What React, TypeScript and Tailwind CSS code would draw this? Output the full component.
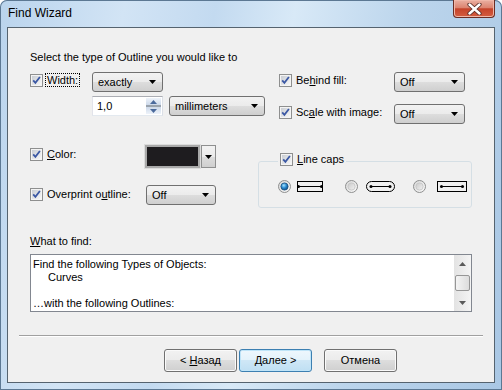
import React from "react";

const comboBg = "bg-[linear-gradient(#f2f2f2,#ebebeb_50%,#dddddd_50%,#cfcfcf)]";

const Check = () => (
  <svg width="13" height="13" viewBox="0 0 13 13" className="shrink-0">
    <defs>
      <linearGradient id="cbIn" x1="0" y1="0" x2="1" y2="1">
        <stop offset="0" stopColor="#c9cdd3" />
        <stop offset="1" stopColor="#f7f7f7" />
      </linearGradient>
    </defs>
    <rect x="0.5" y="0.5" width="12" height="12" fill="#f4f4f4" stroke="#8e8f8f" />
    <rect x="2" y="2" width="9" height="9" fill="url(#cbIn)" />
    <path d="M3.2 6.4 5.4 8.9 9.9 3" fill="none" stroke="#3b58a4" strokeWidth="1.8" />
  </svg>
);

const Radio = ({ on = false }: { on?: boolean }) => (
  <svg width="13" height="13" viewBox="0 0 13 13" className="shrink-0">
    <defs>
      <linearGradient id="rdOut" x1="0" y1="0" x2="1" y2="1">
        <stop offset="0" stopColor="#d6d6d6" />
        <stop offset="1" stopColor="#fbfbfb" />
      </linearGradient>
      <linearGradient id="rdOff" x1="0" y1="0" x2="1" y2="1">
        <stop offset="0" stopColor="#c9c9c9" />
        <stop offset="1" stopColor="#f2f2f2" />
      </linearGradient>
      <radialGradient id="rdOn" cx="0.4" cy="0.35" r="0.7">
        <stop offset="0" stopColor="#a6e4ff" />
        <stop offset="0.5" stopColor="#2a8ad0" />
        <stop offset="1" stopColor="#0c4a82" />
      </radialGradient>
    </defs>
    <circle cx="6.5" cy="6.5" r="6" fill="url(#rdOut)" stroke="#8e8f8f" />
    <circle
      cx="6.5"
      cy="6.5"
      r="3.6"
      fill={on ? "url(#rdOn)" : "url(#rdOff)"}
      stroke={on ? "#1b4f7e" : "#c4c4c4"}
      strokeWidth="0.8"
    />
  </svg>
);

const Arrow = ({ up = false, color = "#000" }: { up?: boolean; color?: string }) => (
  <svg width="7" height="4" viewBox="0 0 7 4" className="shrink-0">
    <path d={up ? "M0 4h7L3.5 0z" : "M0 0h7L3.5 4z"} fill={color} />
  </svg>
);

const Combo = ({ text, className = "" }: { text: string; className?: string }) => (
  <div
    className={`flex h-[20px] shrink-0 items-center justify-between rounded-[3px] border border-[#707070] ${comboBg} pl-[5px] pr-[6px] ${className}`}
  >
    <span>{text}</span>
    <Arrow />
  </div>
);

const Spin = () => (
  <div className="flex h-[20px] w-[71px] shrink-0 border border-[#abadb3] border-b-[#e3e9ef] border-l-[#e2e3ea] border-r-[#dbdfe6] bg-white">
    <span className="flex-1 pl-[4px] leading-[18px]">1,0</span>
    <div className="my-[1px] mr-[1px] flex w-[15px] flex-col">
      <div className="flex h-[7px] items-center justify-center bg-[linear-gradient(#eef3fa,#cdd9ea)]">
        <Arrow up color="#4b6a9c" />
      </div>
      <div className="h-[2px] bg-[#9aa3ad]" />
      <div className="flex h-[7px] items-center justify-center bg-[linear-gradient(#cdd9ea,#eef3fa)]">
        <Arrow color="#4b6a9c" />
      </div>
    </div>
  </div>
);

const ColorBox = () => (
  <div className="flex h-[23px] w-[71px] shrink-0">
    <div className="flex-1 border-2 border-[#a9a9a9] bg-[#1e1c1f] outline outline-1 outline-[#dcdcdc]" />
    <div className={`ml-[1px] flex w-[15px] items-center justify-center border border-[#8e8f8f] ${comboBg}`}>
      <Arrow />
    </div>
  </div>
);

const Btn = ({
  children,
  def = false,
  className = "",
}: {
  children: React.ReactNode;
  def?: boolean;
  className?: string;
}) => (
  <div
    className={`flex h-[23px] w-[73px] items-center justify-center rounded-[3px] border ${
      def
        ? "border-[#3c7fb1] shadow-[inset_0_0_0_1px_#bfe4f8] bg-[linear-gradient(#eef7fd,#e3f2fb_50%,#cfe7f6_50%,#bfdff3)]"
        : `border-[#707070] shadow-[inset_0_0_0_1px_#fafafa] ${comboBg}`
    } ${className}`}
  >
    {children}
  </div>
);

const CapButt = () => (
  <svg width="26" height="11" viewBox="0 0 26 11">
    <rect x="0.5" y="0.5" width="25" height="10" fill="none" stroke="#000" />
    <line x1="1" y1="5.5" x2="25" y2="5.5" stroke="#000" />
    <circle cx="1.5" cy="5.5" r="1.5" fill="#000" />
    <circle cx="24.5" cy="5.5" r="1.5" fill="#000" />
  </svg>
);

const CapRound = () => (
  <svg width="29" height="11" viewBox="0 0 29 11">
    <rect x="0.5" y="0.5" width="28" height="10" rx="5" fill="none" stroke="#000" />
    <line x1="5" y1="5.5" x2="24" y2="5.5" stroke="#000" />
    <circle cx="5" cy="5.5" r="1.5" fill="#000" />
    <circle cx="24" cy="5.5" r="1.5" fill="#000" />
  </svg>
);

const CapSquare = () => (
  <svg width="30" height="11" viewBox="0 0 30 11">
    <rect x="0.5" y="0.5" width="29" height="10" fill="none" stroke="#000" />
    <line x1="4.5" y1="5.5" x2="25.5" y2="5.5" stroke="#000" />
    <circle cx="4.5" cy="5.5" r="1.5" fill="#000" />
    <circle cx="25.5" cy="5.5" r="1.5" fill="#000" />
  </svg>
);

const CloseButton = () => (
  <div className="mr-[7px] flex h-[18px] w-[42px] items-center justify-center rounded-b-[4px] border border-t-0 border-[#6a2d24] bg-[linear-gradient(#eab0a2,#dc8470_45%,#c5432a_52%,#d45d40)] shadow-[inset_0_0_0_1px_#f0b7a8]">
    <svg width="15" height="12" viewBox="0 0 15 12">
      <path d="M2.5 1.5 12.5 10.5M12.5 1.5 2.5 10.5" stroke="#5c3029" strokeWidth="4.2" strokeLinecap="round" />
      <path d="M2.5 1.5 12.5 10.5M12.5 1.5 2.5 10.5" stroke="#fff" strokeWidth="2.4" strokeLinecap="round" />
    </svg>
  </div>
);

export default function App() {
  return (
    <div className="h-[390px] w-[502px] overflow-hidden rounded-t-[7px] bg-[linear-gradient(100deg,#bad4ed_0%,#d2e4f5_22%,#c3daf0_38%,#d8e9f7_52%,#bcd5ec_72%,#a9c7e4_100%)] text-[11px] leading-[13px] text-black shadow-[inset_0_0_0_1px_#5c7893] font-[family-name:'Liberation_Sans',Arial,sans-serif]">
      {/* title bar */}
      <div className="flex h-[27px] items-start justify-between">
        <span className="pl-[8px] pt-[6px] text-[12px] leading-[15px]">Find Wizard</span>
        <CloseButton />
      </div>

      {/* client area */}
      <div className="ml-[7px] h-[356px] w-[488px] border border-[#55636f] bg-[#f0f0f0] px-[22px] pt-[23px]">
        <div>Select the type of Outline you would like to</div>

        <div className="mt-[8px] flex items-start">
          <div className="w-[235px]">
            <div className="flex h-[20px] items-start">
              <div className="flex w-[62px] items-center pt-[1px]">
                <Check />
                <span className="ml-[2px] border border-dotted border-black px-[1px] leading-[12px]">Width:</span>
              </div>
              <Combo text="exactly" className="w-[71px]" />
            </div>
            <div className="mt-[4px] flex pl-[62px]">
              <Spin />
              <Combo text="millimeters" className="ml-[6px] w-[96px]" />
            </div>
          </div>
          <div className="ml-[14px]">
            <div className="flex h-[20px] items-start">
              <div className="flex w-[115px] items-center pt-[2px]">
                <Check />
                <span className="ml-[4px]">
                  Be<u>h</u>ind fill:
                </span>
              </div>
              <Combo text="Off" className="w-[71px]" />
            </div>
            <div className="mt-[12px] flex h-[20px] items-start">
              <div className="flex w-[115px] items-center pt-[2px]">
                <Check />
                <span className="ml-[4px]">
                  Sc<u>a</u>le with image:
                </span>
              </div>
              <Combo text="Off" className="w-[71px]" />
            </div>
          </div>
        </div>

        <div className="mt-[21px] flex items-start">
          <div className="w-[187px]">
            <div className="flex h-[23px] items-start">
              <div className="flex w-[115px] items-center pt-[3px]">
                <Check />
                <span className="ml-[4px]">
                  <u>C</u>olor:
                </span>
              </div>
              <ColorBox />
            </div>
            <div className="mt-[17px] flex items-start">
              <div className="flex w-[116px] items-center pt-[3px]">
                <Check />
                <span className="ml-[4px]">
                  Overprint o<u>u</u>tline:
                </span>
              </div>
              <Combo text="Off" className="w-[70px]" />
            </div>
          </div>
          <fieldset className="ml-[42px] mt-[8px] h-[55px] w-[221px] rounded-[3px] border border-[#d5dfe5]">
            <legend className="ml-[19px] px-[2px]">
              <span className="inline-flex items-center">
                <Check />
                <span className="ml-[4px]">
                  <u>L</u>ine caps
                </span>
              </span>
            </legend>
            <div className="mt-[11px] flex items-center pl-[19px]">
              <Radio on />
              <span className="ml-[6px] flex">
                <CapButt />
              </span>
              <span className="ml-[22px] flex">
                <Radio />
              </span>
              <span className="ml-[8px] flex">
                <CapRound />
              </span>
              <span className="ml-[18px] flex">
                <Radio />
              </span>
              <span className="ml-[11px] flex">
                <CapSquare />
              </span>
            </div>
          </fieldset>
        </div>

        <div className="mt-[27px]">
          <u>W</u>hat to find:
        </div>
        <div className="mt-[6px] flex h-[58px] border border-[#828790] bg-white">
          <div className="flex-1 pl-[2px] pt-[3px]">
            <div>Find the following Types of Objects:</div>
            <div className="pl-[15px]">Curves</div>
            <div>&nbsp;</div>
            <div>…with the following Outlines:</div>
          </div>
          <div className="flex w-[17px] flex-col items-center bg-[linear-gradient(90deg,#e3e3e3,#f4f4f4)]">
            <div className="flex h-[17px] items-center justify-center">
              <Arrow up color="#5a5a5a" />
            </div>
            <div className="mt-[3px] h-[16px] w-[15px] rounded-[2px] border border-[#969696] bg-[linear-gradient(90deg,#f4f4f4,#dcdcdc)]" />
            <div className="flex-1" />
            <div className="flex h-[17px] items-center justify-center">
              <Arrow color="#5a5a5a" />
            </div>
          </div>
        </div>

        <div className="-mx-[11px] mt-[23px] h-[2px] border-t border-b border-t-[#a0a0a0] border-b-white" />

        <div className="mt-[12px] flex pl-[134px]">
          <Btn>
            &lt; <u className="ml-[3px]">Н</u>азад
          </Btn>
          <Btn def className="ml-[2px]">
            Далее &gt;
          </Btn>
          <Btn className="ml-[12px]">Отмена</Btn>
        </div>
      </div>
    </div>
  );
}
